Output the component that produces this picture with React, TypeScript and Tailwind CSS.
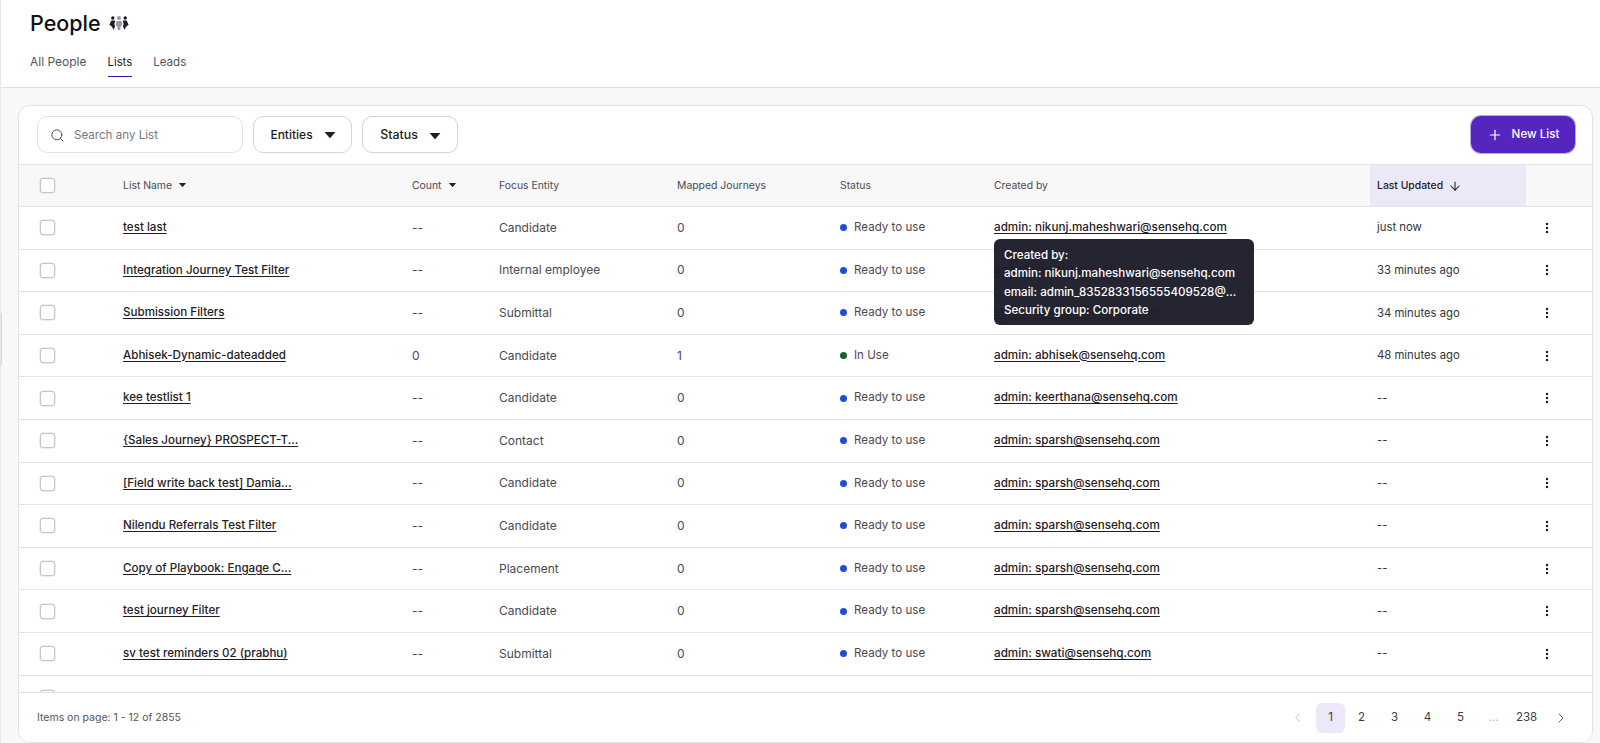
import { ArrowDown, ChevronLeft, ChevronRight, MoreVertical, Plus, Search } from "lucide-react";

const rows = [
  { name: "test last", count: "--", entity: "Candidate", journeys: "0", status: "Ready to use", by: "admin: nikunj.maheshwari@sensehq.com", updated: "just now" },
  { name: "Integration Journey Test Filter", count: "--", entity: "Internal employee", journeys: "0", status: "Ready to use", by: "admin: swati@sensehq.com", updated: "33 minutes ago" },
  { name: "Submission Filters", count: "--", entity: "Submittal", journeys: "0", status: "Ready to use", by: "admin: sparsh@sensehq.com", updated: "34 minutes ago" },
  { name: "Abhisek-Dynamic-dateadded", count: "0", entity: "Candidate", journeys: "1", status: "In Use", by: "admin: abhisek@sensehq.com", updated: "48 minutes ago" },
  { name: "kee testlist 1", count: "--", entity: "Candidate", journeys: "0", status: "Ready to use", by: "admin: keerthana@sensehq.com", updated: "--" },
  { name: "{Sales Journey} PROSPECT-T...", count: "--", entity: "Contact", journeys: "0", status: "Ready to use", by: "admin: sparsh@sensehq.com", updated: "--" },
  { name: "[Field write back test] Damia...", count: "--", entity: "Candidate", journeys: "0", status: "Ready to use", by: "admin: sparsh@sensehq.com", updated: "--" },
  { name: "Nilendu Referrals Test Filter", count: "--", entity: "Candidate", journeys: "0", status: "Ready to use", by: "admin: sparsh@sensehq.com", updated: "--" },
  { name: "Copy of Playbook: Engage C...", count: "--", entity: "Placement", journeys: "0", status: "Ready to use", by: "admin: sparsh@sensehq.com", updated: "--" },
  { name: "test journey Filter", count: "--", entity: "Candidate", journeys: "0", status: "Ready to use", by: "admin: sparsh@sensehq.com", updated: "--" },
  { name: "sv test reminders 02 (prabhu)", count: "--", entity: "Submittal", journeys: "0", status: "Ready to use", by: "admin: swati@sensehq.com", updated: "--" },
];

const gridCols = "grid grid-cols-[104px_289px_87px_178px_163px_154px_376px_156px_1fr]";

function Caret({ big }: { big?: boolean }) {
  return (
    <svg viewBox="0 0 10 6" className={big ? "h-[6px] w-[10px]" : "h-[4px] w-[7px]"} fill="#1f2024">
      <path d="M0 0.4C0 0.1 0.2 0 0.5 0h9c0.3 0 0.5 0.1 0.5 0.4 0 0.2-0.1 0.3-0.2 0.4L5.5 5.7c-0.3 0.3-0.7 0.3-1 0L0.2 0.8C0.1 0.7 0 0.6 0 0.4z" />
    </svg>
  );
}

function PeopleIcon() {
  return (
    <svg viewBox="0 0 20 14" className="h-[14px] w-[20px]">
      <circle cx="3.8" cy="2" r="1.7" fill="#1c1c22" />
      <circle cx="16.2" cy="2" r="1.7" fill="#1c1c22" />
      <circle cx="10" cy="2" r="2" fill="#9b9ba3" />
      <path d="M7.4 5h5.2l.8 4.6-1.6.5-.6 3.9H8.8l-.6-3.9-1.6-.5z" fill="#9b9ba3" />
      <path d="M2.4 4.6h3.8L5.4 8l.6 2.8-1.6 3-1.4-3L0.4 8.8z" fill="#1c1c22" />
      <path d="M17.6 4.6h-3.8l.8 3.4-.6 2.8 1.6 3 1.4-3 2.6-2z" fill="#1c1c22" />
    </svg>
  );
}

function Checkbox() {
  return <div className="h-[15px] w-[15px] rounded-[3px] border border-[#c6c6c9] bg-white shadow-[0_0_0_0.5px_#dcdcdf]" />;
}

function Row({ row }: { row: (typeof rows)[number] }) {
  return (
    <div className={`${gridCols} h-[42.6px] shrink-0 items-center border-b border-[#e4e4e6] text-[12px] text-[#4a4a50]`}>
      <div className="pl-[21px]">
        <Checkbox />
      </div>
      <div className="text-[11.6px] font-medium whitespace-nowrap text-[#1f2024] underline underline-offset-2">{row.name}</div>
      <div>{row.count}</div>
      <div>{row.entity}</div>
      <div>{row.journeys}</div>
      <div className="flex items-center gap-[7px] text-[11.6px]">
        <span className={`h-[7px] w-[7px] rounded-full ${row.status === "In Use" ? "bg-[#14622f]" : "bg-[#1d4ed8]"}`} />
        {row.status}
      </div>
      <div className="text-[11.7px] font-medium whitespace-nowrap text-[#1f2024] underline underline-offset-2">{row.by}</div>
      <div className="pl-[7px] text-[11.3px] whitespace-nowrap text-[#333338]">{row.updated}</div>
      <div className="pl-[14px]">
        <MoreVertical className="h-[14px] w-[14px] text-[#1f2024]" strokeWidth={2.2} />
      </div>
    </div>
  );
}

export default function App() {
  return (
    <div className="relative flex h-[743px] w-[1600px] flex-col overflow-hidden border-l border-[#e6e6e8] bg-[#f8f8f8] font-['Inter','Noto_Sans',sans-serif]">
      <div className="h-[88px] shrink-0 border-b border-[#dfdfe1] bg-white pl-[29px]">
        <div className="flex items-center gap-[8px] pt-[9px]">
          <h1 className="text-[21.5px] leading-[28px] font-medium text-[#111114]">People</h1>
          <PeopleIcon />
        </div>
        <div className="mt-[15px] flex gap-[21px] text-[12px] leading-[18px] text-[#55555b]">
          <div className="h-[25px] pt-[1px]">All People</div>
          <div className="h-[25px] border-b border-[#2a1aa8] pt-[1px] text-[11.3px] text-[#1f2024]">Lists</div>
          <div className="h-[25px] pt-[1px] text-[11.6px]">Leads</div>
        </div>
      </div>

      <div className="relative mt-[17px] mr-[7px] ml-[17px] flex min-h-0 flex-1 flex-col overflow-hidden rounded-[12px] border border-[#e2e2e4] bg-white">
        <div className="flex h-[58px] shrink-0 items-start justify-between pt-[10px] pr-[17px] pl-[18px]">
          <div className="flex gap-[10px]">
            <div className="flex h-[37px] w-[206px] items-center gap-[9px] rounded-[10px] border border-[#e2e2e4] pt-[2px] pl-[12px] text-[11.6px] text-[#77777d]">
              <Search className="h-[15px] w-[15px] text-[#55555b]" strokeWidth={1.6} />
              Search any List
            </div>
            <div className="flex h-[37px] w-[99px] items-center justify-center gap-[12px] rounded-[10px] border border-[#d4d4d7] text-[12px] font-medium text-[#1f2024]">
              Entities
              <Caret big />
            </div>
            <div className="flex h-[37px] w-[96px] items-center justify-center gap-[12px] rounded-[10px] border border-[#d4d4d7] pt-[2px] text-[12.4px] font-medium text-[#1f2024]">
              Status
              <Caret big />
            </div>
          </div>
          <button className="flex h-[37px] w-[104px] items-center justify-center gap-[9px] rounded-[10px] bg-[#5526bd] text-[11.6px] font-medium text-white shadow-[0_0_0_1px_#b9a6ea]">
            <Plus className="h-[16px] w-[16px]" strokeWidth={1.8} />
            New List
          </button>
        </div>

        <div className={`${gridCols} h-[43px] shrink-0 items-center border-y border-[#e4e4e6] bg-[#f8f8f8] text-[10.4px] text-[#4a4a50]`}>
          <div className="pl-[21px]">
            <Checkbox />
          </div>
          <div className="flex items-center gap-[7px]">
            List Name
            <Caret />
          </div>
          <div className="flex items-center gap-[7px]">
            Count
            <Caret />
          </div>
          <div>Focus Entity</div>
          <div>Mapped Journeys</div>
          <div>Status</div>
          <div>Created by</div>
          <div className="flex h-full items-center gap-[5px] bg-[#ece8f8] pl-[7px] font-medium whitespace-nowrap text-[#1f2024]">
            Last Updated
            <ArrowDown className="h-[14px] w-[14px]" strokeWidth={1.8} />
          </div>
          <div />
        </div>

        <div className="flex h-[485px] shrink-0 flex-col overflow-hidden">
          {rows.map((row, i) => (
            <Row key={i} row={row} />
          ))}
          <div className="pt-[14px] pl-[21px]">
            <Checkbox />
          </div>
        </div>

        <div className="flex flex-1 items-center justify-between border-t border-[#e4e4e6] bg-white pr-[23px] pl-[18px]">
          <div className="text-[10.5px] text-[#55555b]">Items on page: 1 - 12 of 2855</div>
          <div className="flex items-center text-[11.5px] text-[#3c3c42]">
            <ChevronLeft className="mr-[11px] h-[15px] w-[15px] text-[#c4c4c8]" strokeWidth={1.4} />
            <div className="flex h-[30px] w-[29px] items-center justify-center rounded-[6px] bg-[#ece8f8]">1</div>
            <div className="flex h-[30px] w-[33px] items-center justify-center">2</div>
            <div className="flex h-[30px] w-[33px] items-center justify-center">3</div>
            <div className="flex h-[30px] w-[33px] items-center justify-center">4</div>
            <div className="flex h-[30px] w-[33px] items-center justify-center">5</div>
            <div className="flex h-[30px] w-[33px] items-center justify-center text-[#b8b8bc]">...</div>
            <div className="flex h-[30px] w-[33px] items-center justify-center">238</div>
            <ChevronRight className="ml-[10px] h-[16px] w-[16px] text-[#55555b]" strokeWidth={1.4} />
          </div>
        </div>

        <div className="absolute top-[133px] left-[975px] w-[260px] rounded-[6px] bg-[#1e1e2a]/[0.97] px-[10px] pt-[7px] pb-[6px] text-[11.6px] leading-[18.3px] font-medium text-white">
          <div>Created by:</div>
          <div>admin: nikunj.maheshwari@sensehq.com</div>
          <div>email: admin_8352833156555409528@...</div>
          <div>Security group: Corporate</div>
        </div>
      </div>

      <div className="absolute top-[313px] left-[-1px] h-[52px] w-[2px] bg-[#d6d6d8]" />
    </div>
  );
}
